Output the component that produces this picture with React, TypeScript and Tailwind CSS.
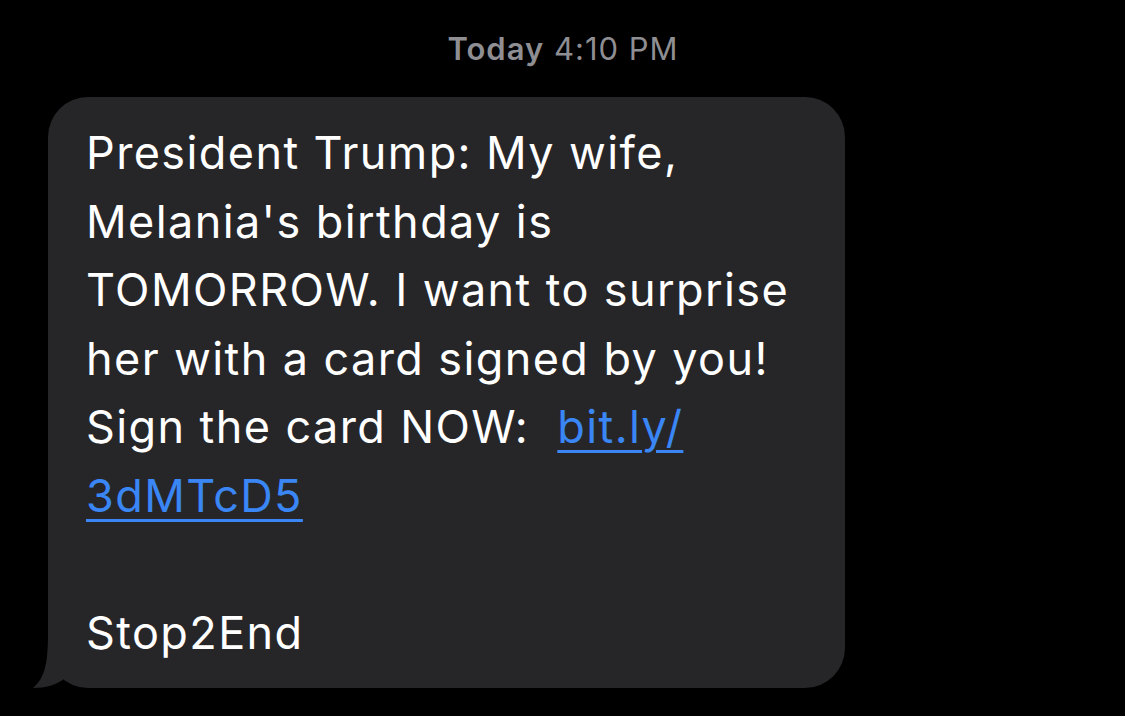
import React from 'react';

export default function App() {
  return (
    <div className="w-[1125px] h-[716px] bg-black overflow-hidden" style={{ fontFamily: 'Inter, "Noto Sans", sans-serif' }}>
      <div className="pt-[29px] text-center text-[31px] leading-[40px] text-[#8e8e93] tracking-[1px] pl-[1px]">
        <span className="font-semibold">Today</span> 4:10 PM
      </div>

      <div className="relative ml-[48px] mt-[28px] w-[797px]">
        <div className="relative z-10 rounded-[40px] bg-[#262629] pl-[38px] pr-[40px] pt-[22px] pb-[21px] text-[45px] leading-[68.5px] tracking-[1.4px] text-white">
          <p>
            <span className="block">President Trump: My wife,</span>
            <span className="block">Melania's birthday is</span>
            <span className="block">TOMORROW. I want to surprise</span>
            <span className="block">her with a card signed by you!</span>
            <span className="block">
              Sign the card NOW:{'\u00a0 '}
              <a className="text-[#3a86f5] underline underline-offset-[7px] decoration-[2.5px]">bit.ly/</a>
            </span>
            <span className="block">
              <a className="text-[#3a86f5] underline underline-offset-[7px] decoration-[2.5px]">3dMTcD5</a>
            </span>
          </p>
          <p>&nbsp;</p>
          <p>Stop2End</p>
        </div>
        {/* bubble tail */}
        <svg className="absolute left-[-17px] bottom-0 z-0" width="60" height="60" viewBox="0 0 60 60">
          <path d="M17 5 C17 35 14 50 2 60 C14 60 26 57 34 50 L50 40 L50 5 Z" fill="#262629" />
        </svg>
      </div>
    </div>
  );
}
